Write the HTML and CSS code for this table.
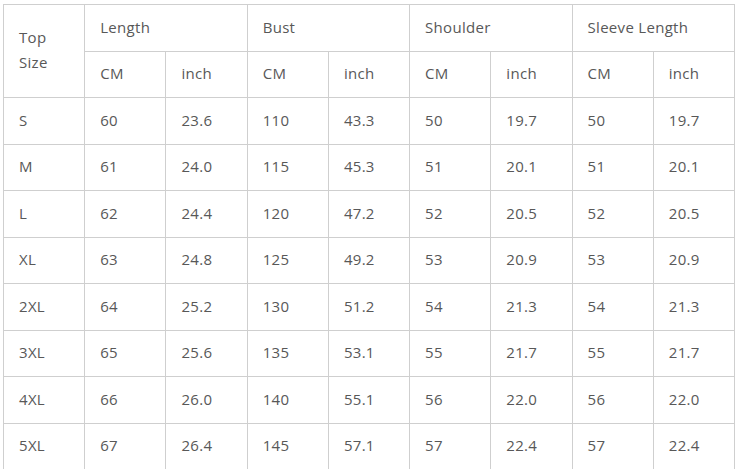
FILE: index.html
```html
<!DOCTYPE html>
<html>
<head>
<meta charset="utf-8">
<link rel="stylesheet" href="styles.css">
</head>
<body>
<table class="size-table">
  <colgroup>
    <col><col><col><col><col><col><col><col><col>
  </colgroup>
  <tr>
    <td rowspan="2" class="top-size">Top<br>Size</td>
    <td colspan="2">Length</td>
    <td colspan="2">Bust</td>
    <td colspan="2">Shoulder</td>
    <td colspan="2">Sleeve Length</td>
  </tr>
  <tr>
    <td>CM</td><td>inch</td><td>CM</td><td>inch</td><td>CM</td><td>inch</td><td>CM</td><td>inch</td>
  </tr>
  <tr><td>S</td><td>60</td><td>23.6</td><td>110</td><td>43.3</td><td>50</td><td>19.7</td><td>50</td><td>19.7</td></tr>
  <tr><td>M</td><td>61</td><td>24.0</td><td>115</td><td>45.3</td><td>51</td><td>20.1</td><td>51</td><td>20.1</td></tr>
  <tr><td>L</td><td>62</td><td>24.4</td><td>120</td><td>47.2</td><td>52</td><td>20.5</td><td>52</td><td>20.5</td></tr>
  <tr><td>XL</td><td>63</td><td>24.8</td><td>125</td><td>49.2</td><td>53</td><td>20.9</td><td>53</td><td>20.9</td></tr>
  <tr><td>2XL</td><td>64</td><td>25.2</td><td>130</td><td>51.2</td><td>54</td><td>21.3</td><td>54</td><td>21.3</td></tr>
  <tr><td>3XL</td><td>65</td><td>25.6</td><td>135</td><td>53.1</td><td>55</td><td>21.7</td><td>55</td><td>21.7</td></tr>
  <tr><td>4XL</td><td>66</td><td>26.0</td><td>140</td><td>55.1</td><td>56</td><td>22.0</td><td>56</td><td>22.0</td></tr>
  <tr><td>5XL</td><td>67</td><td>26.4</td><td>145</td><td>57.1</td><td>57</td><td>22.4</td><td>57</td><td>22.4</td></tr>
</table>
</body>
</html>
```

FILE: styles.css
```css
html, body {
  margin: 0;
  padding: 0;
  background: #fff;
}
body {
  padding: 4px 0 0 3px;
  font-family: "Open Sans", "Noto Sans", sans-serif;
  font-size: 15px;
  letter-spacing: 0.3px;
  color: #585858;
}
.size-table {
  border-collapse: collapse;
  table-layout: fixed;
  width: 732px;
}
.size-table td {
  border: 1px solid #cfcfcf;
  padding: 0 0 2px 15px;
  height: 46.5px;
  vertical-align: middle;
  line-height: 24px;
  white-space: nowrap;
  box-sizing: border-box;
}
.size-table .top-size {
  line-height: 25px;
}
```
